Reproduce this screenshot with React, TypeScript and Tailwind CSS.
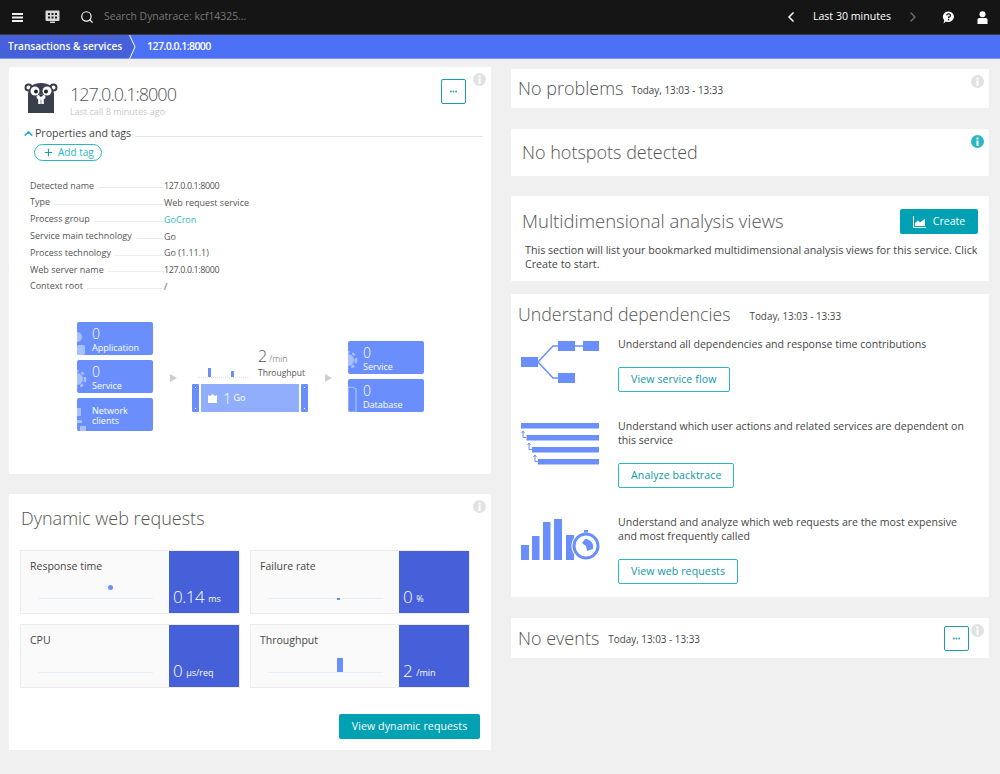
import { Search, ChevronLeft, ChevronRight, ChevronUp, Plus, Ellipsis } from "lucide-react";

const font = "font-['Open_Sans','Noto_Sans',sans-serif]";

const props = [
  { label: "Detected name", value: "127.0.0.1:8000", tight: true },
  { label: "Type", value: "Web request service" },
  { label: "Process group", value: "GoCron", link: true },
  { label: "Service main technology", value: "Go" },
  { label: "Process technology", value: "Go (1.11.1)" },
  { label: "Web server name", value: "127.0.0.1:8000", tight: true },
  { label: "Context root", value: "/" },
];

function InfoDot({ active }: { active?: boolean }) {
  return (
    <svg className="absolute top-[6px] right-[5px]" width="13" height="13" viewBox="0 0 13 13">
      <circle cx="6.5" cy="6.5" r="6.5" fill={active ? "#2ab6c4" : "#e2e2e2"} />
      <rect x="5.5" y="5.5" width="2" height="5.5" fill="#fff" />
      <rect x="5.5" y="2.5" width="2" height="2" fill="#fff" />
    </svg>
  );
}

function Gopher() {
  return (
    <svg width="34" height="32" viewBox="0 0 34 32">
      <circle cx="4.5" cy="5.5" r="3" fill="#fff" stroke="#3a3f4c" strokeWidth="2" />
      <circle cx="29.5" cy="5.5" r="3" fill="#fff" stroke="#3a3f4c" strokeWidth="2" />
      <path d="M4 31 L4 12 Q5 1 17 1 Q29 1 30 12 L30 31 Z" fill="#3a3f4c" />
      <circle cx="11" cy="9" r="4.5" fill="#fff" />
      <circle cx="23" cy="9" r="4.5" fill="#fff" />
      <circle cx="12" cy="9.5" r="2" fill="#222" />
      <circle cx="22" cy="9.5" r="2" fill="#222" />
      <ellipse cx="17" cy="15" rx="4.5" ry="2.6" fill="#fff" />
      <ellipse cx="17" cy="13.6" rx="1.8" ry="1.1" fill="#222" />
      <rect x="14.2" y="17" width="2.5" height="5" fill="#fff" />
      <rect x="17.3" y="17" width="2.5" height="5" fill="#fff" />
    </svg>
  );
}

function FlowBox({ count, label, glyph }: { count?: string; label: string; glyph: "gear" | "db" | "net" | "app" }) {
  return (
    <div className="relative h-[33px] w-[76px] overflow-hidden rounded-[2px] bg-[#6a8ffd] pl-[15px] text-white">
      <svg className="absolute top-0 left-0" width="12" height="33" viewBox="0 0 12 33">
        {glyph === "db" ? (
          <path d="M0 8 Q6 8 8 10 L8 33 L0 33 Z" fill="none" stroke="#a9c0fe" strokeWidth="1.2" />
        ) : glyph === "net" ? (
          <path d="M0 10 h4 v8 h-4 Z M0 22 h5 v3 h-5 Z M3 28 h6 v5 h-6 Z" fill="#a9c0fe" />
        ) : glyph === "app" ? (
          <>
            <circle cx="0" cy="15" r="5" fill="#a9c0fe" />
            <rect x="0" y="23" width="8" height="10" rx="2" fill="#a9c0fe" />
          </>
        ) : (
          <>
            <circle cx="0" cy="19" r="6" fill="#a9c0fe" />
            <circle cx="0" cy="19" r="8" fill="none" stroke="#a9c0fe" strokeWidth="2.5" strokeDasharray="3 3" />
          </>
        )}
      </svg>
      {count ? (
        <>
          <div className="mt-[4px] text-[14px] leading-[16px] font-light">{count}</div>
          <div className="mt-[1px] text-[9px] leading-[10px]">{label}</div>
        </>
      ) : (
        <div className="mt-[8px] w-[50px] text-[9px] leading-[10px]">{label}</div>
      )}
    </div>
  );
}

function Arrow() {
  return <span className="block h-0 w-0 border-y-[4px] border-l-[7px] border-y-transparent border-l-[#cfcfcf]" />;
}

function ServiceFlow() {
  return (
    <div className="mt-[27px] ml-[68px] flex items-center">
      <div className="flex flex-col gap-[5px]">
        <FlowBox count="0" label="Application" glyph="app" />
        <FlowBox count="0" label="Service" glyph="gear" />
        <FlowBox label="Network clients" glyph="net" />
      </div>
      <div className="mt-[4px] ml-[17px]"><Arrow /></div>
      <div className="mt-[6px] ml-[15px] flex w-[116px] flex-col">
        <div className="flex h-[32px] items-end">
          <div className="ml-[6px] flex h-[12px] w-[52px] items-end border-b border-dotted border-[#dde3f0] pl-[10px]">
            <span className="h-[9px] w-[3px] bg-[#6a8ffd]" />
            <span className="ml-[20px] h-[6px] w-[3px] bg-[#6a8ffd]" />
          </div>
          <div className="ml-[8px] flex flex-col items-start text-[#555]">
            <div className="text-[16px] leading-[17px] font-light">2<span className="ml-[2px] text-[9px]">/min</span></div>
            <div className="text-[8.5px] leading-[11px]">Throughput</div>
          </div>
        </div>
        <div className="mt-[6px] flex h-[28px] gap-[2px]">
          <div className="flex w-[7px] flex-col items-center justify-between rounded-[1px] bg-[#6a8ffd] py-[3px]">
            <span className="h-[1px] w-[1px] bg-white" /><span className="h-[1px] w-[1px] bg-white" />
          </div>
          <div className="flex flex-1 items-center bg-[#91aefd] pl-[6px] text-white">
            <svg width="11" height="11" viewBox="0 0 11 11">
              <path d="M1 2 l2 1 l2.5 -2 l2.5 2 l2 -1 v8 h-9 Z" fill="#fff" />
            </svg>
            <span className="ml-[5px] text-[15px] font-light">1</span>
            <span className="ml-[2px] text-[9px]">Go</span>
          </div>
          <div className="flex w-[7px] flex-col items-center justify-between rounded-[1px] bg-[#6a8ffd] py-[3px]">
            <span className="h-[1px] w-[1px] bg-white" /><span className="h-[1px] w-[1px] bg-white" />
          </div>
        </div>
      </div>
      <div className="mt-[4px] ml-[17px]"><Arrow /></div>
      <div className="ml-[16px] flex flex-col gap-[5px]">
        <FlowBox count="0" label="Service" glyph="gear" />
        <FlowBox count="0" label="Database" glyph="db" />
      </div>
    </div>
  );
}

function MetricTile({ title, value, unit, chart }: { title: string; value: string; unit: string; chart: React.ReactNode }) {
  return (
    <div className="flex h-[64px] w-[220px] border border-[#ececec] bg-[#fafafa]">
      <div className="relative flex-1 pl-[9px]">
        <div className="mt-[8px] text-[10.5px] leading-[15px] text-[#454646]">{title}</div>
        <div className="absolute top-[47px] left-[17px] h-px w-[115px] bg-[#e6edfb]" />
        {chart}
      </div>
      <div className="flex w-[70px] items-end bg-[#4560d8] pb-[6px] pl-[4px] text-white">
        <span className="text-[17px] leading-[20px] font-light tracking-[-0.5px]">{value}</span>
        <span className="mb-[1px] ml-[4px] text-[9px] leading-[14px]">{unit}</span>
      </div>
    </div>
  );
}

function OutlineButton({ children }: { children: React.ReactNode }) {
  return (
    <button className="flex h-[25px] items-center rounded-[2px] border border-[#2ab6c4] bg-white px-[12px] text-[10.6px] tracking-[0.1px] text-[#0d98a8]">
      {children}
    </button>
  );
}

function DependencyRow({ icon, text, action, className }: { icon: React.ReactNode; text: React.ReactNode; action: string; className: string }) {
  return (
    <div className={`flex ${className}`}>
      <div className="w-[98px] shrink-0 pt-[4px] pl-[1px]">{icon}</div>
      <div>
        <p className="max-w-[355px] text-[10.6px] leading-[14px] text-[#454646]">{text}</p>
        <div className="mt-[16px]"><OutlineButton>{action}</OutlineButton></div>
      </div>
    </div>
  );
}

export default function App() {
  return (
    <div className={`${font} h-[774px] w-[1000px] overflow-hidden bg-[#f0f0f0]`}>
      <header className="flex h-[35px] items-center border-b border-[#3b3b3b] bg-[#151515] text-white">
        <svg className="ml-[12px]" width="11" height="9" viewBox="0 0 11 9">
          <path d="M0 0h11v2H0zM0 3.5h11v2H0zM0 7h11v2H0z" fill="#f0f0f0" />
        </svg>
        <svg className="ml-[22px]" width="15" height="14" viewBox="0 0 15 14">
          <rect x="0.5" y="0.5" width="14" height="10.5" rx="1" fill="#d8d8d8" />
          <path d="M3 3h2v2H3zM6.5 3h2v2h-2zM10 3h2v2h-2zM3 6.5h2v2H3zM6.5 6.5h2v2h-2zM10 6.5h2v2h-2z" fill="#222" />
          <rect x="5" y="11.5" width="5" height="1.5" fill="#d8d8d8" />
        </svg>
        <Search size={14} className="ml-[20px]" strokeWidth={2} />
        <span className="ml-[10px] text-[10.4px] text-[#777]">Search Dynatrace: kcf14325...</span>
        <ChevronLeft size={16} className="ml-auto" strokeWidth={2.5} />
        <span className="ml-[14px] text-[10.6px]">Last 30 minutes</span>
        <ChevronRight size={16} className="ml-[14px] text-[#707070]" strokeWidth={2} />
        <svg className="ml-[21px]" width="13" height="13" viewBox="0 0 13 13">
          <path d="M6.5 0.5 A5.7 5.2 0 1 1 3.8 10.4 L1.5 12.5 L2.2 9 A5.7 5.2 0 0 1 6.5 0.5 Z" fill="#fff" />
          <path d="M4.7 4.3 A1.9 1.7 0 1 1 6.6 6.2 V7.2" fill="none" stroke="#151515" strokeWidth="1.3" />
          <rect x="5.9" y="8" width="1.4" height="1.4" fill="#151515" />
        </svg>
        <svg className="mr-[12px] ml-[22px]" width="11" height="13" viewBox="0 0 11 13">
          <circle cx="5.5" cy="3.2" r="3" fill="#fff" />
          <path d="M0.5 13 V8.6 Q0.5 7 2.5 7 H8.5 Q10.5 7 10.5 8.6 V13 Z" fill="#fff" />
        </svg>
      </header>

      <nav className="flex h-[24px] items-center border-b border-[#7d97f8] bg-[#4d71f6] text-[10.6px] font-semibold text-white">
        <div className="relative flex h-full w-[130px] items-center bg-[#4560d8] pl-[8px] text-[10.1px] whitespace-nowrap">
          Transactions &amp; services
          <svg className="absolute top-0 -right-[6px]" width="7" height="24" viewBox="0 0 7 24">
            <path d="M0 0 L6 12 L0 24 Z" fill="#4560d8" />
            <path d="M0.5 0 L6 12 L0.5 24" fill="none" stroke="#fff" strokeWidth="1" />
          </svg>
        </div>
        <span className="ml-[17px] tracking-[-0.6px]">127.0.0.1:8000</span>
      </nav>

      <main className="flex items-start gap-[20px] pt-[8px] pl-[9px]">
        <div className="flex w-[482px] flex-col gap-[20px]">
          <section className="relative h-[407px] bg-white">
            <InfoDot />
            <div className="flex pt-[15px] pl-[15px]">
              <Gopher />
              <div className="ml-[12px]">
                <h1 className="text-[18px] leading-[24px] font-light tracking-[-1px] text-[#555]">127.0.0.1:8000</h1>
                <div className="text-[9px] leading-[12px] text-[#c8c8c8]">Last call 8 minutes ago</div>
              </div>
              <button className="absolute top-[12px] right-[25px] flex h-[25px] w-[25px] items-center justify-center rounded-[2px] border border-[#1f9aa8] text-[#1f9aa8]">
                <Ellipsis size={9} strokeWidth={3} />
              </button>
            </div>
            <div className="mt-[8px] flex items-center pr-[8px] pl-[13px]">
              <ChevronUp size={13} className="text-[#2ab6c4]" strokeWidth={3} />
              <span className="text-[10.6px] leading-[15px] text-[#454646]">Properties and tags</span>
              <span className="mt-[6px] ml-[4px] h-px flex-1 bg-[#e6e6e6]" />
            </div>
            <button className="mt-[3px] ml-[25px] flex h-[17px] items-center rounded-full border border-[#2ab6c4] pr-[7px] pl-[8px] text-[10px] text-[#2ab6c4]">
              <Plus size={11} className="text-[#1f9aa8]" strokeWidth={2.5} />
              <span className="ml-[4px]">Add tag</span>
            </button>
            <dl className="mt-[16px] pl-[21px]">
              {props.map((p) => (
                <div key={p.label} className="flex h-[16.8px] items-center text-[9px]">
                  <dt className="flex w-[134px] items-center text-[#555]">
                    <span className="whitespace-nowrap">{p.label}</span>
                    <span className="mt-[5px] ml-[4px] h-px flex-1 bg-[#ececec]" />
                  </dt>
                  <dd className={`mt-[1px] ${p.link ? "text-[#2ab6c4]" : "text-[#555]"} ${p.tight ? "tracking-[-0.4px]" : ""}`}>{p.value}</dd>
                </div>
              ))}
            </dl>
            <ServiceFlow />
          </section>

          <section className="relative h-[256px] bg-white">
            <InfoDot />
            <h2 className="pt-[12px] pl-[12px] text-[18px] leading-[25px] font-light text-[#555]">Dynamic web requests</h2>
            <div className="mt-[19px] grid w-[461px] grid-cols-2 gap-x-[10px] gap-y-[10px] pl-[11px]">
              <MetricTile title="Response time" value="0.14" unit="ms" chart={<span className="absolute top-[34px] left-[87px] h-[5px] w-[5px] rounded-full bg-[#6a8ffd]" />} />
              <MetricTile title="Failure rate" value="0" unit="%" chart={<span className="absolute top-[47px] left-[86px] h-[2px] w-[3px] bg-[#6a8ffd]" />} />
              <MetricTile title="CPU" value="0" unit="µs/req" chart={null} />
              <MetricTile title="Throughput" value="2" unit="/min" chart={<span className="absolute top-[33px] left-[86px] h-[14px] w-[6px] bg-[#6a8ffd]" />} />
            </div>
            <button className="absolute right-[11px] bottom-[11px] h-[25px] w-[141px] rounded-[2px] bg-[#00a1b2] text-[10.6px] tracking-[0.1px] text-white">
              View dynamic requests
            </button>
          </section>
        </div>

        <div className="flex w-[478px] flex-col pt-[2px]">
          <section className="relative flex h-[39px] items-center bg-white pl-[7px]">
            <InfoDot />
            <h2 className="text-[18px] font-light text-[#555]">No problems</h2>
            <span className="mt-[3px] ml-[8px] text-[9.9px] text-[#454646]">Today, 13:03 - 13:33</span>
          </section>
          <section className="relative mt-[21px] flex h-[47px] items-center bg-white pl-[11px]">
            <InfoDot active />
            <h2 className="text-[18px] font-light text-[#555]">No hotspots detected</h2>
          </section>
          <section className="relative mt-[20px] h-[85px] bg-white pt-[11px] pr-[11px] pl-[11px]">
            <div className="flex items-center justify-between">
              <h2 className="text-[18.5px] leading-[25px] font-light text-[#555]">Multidimensional analysis views</h2>
              <button className="mt-[2px] flex h-[25px] w-[78px] items-center justify-center rounded-[2px] bg-[#00a1b2] text-[10.6px] text-white">
                <svg width="13" height="12" viewBox="0 0 13 12">
                  <path d="M0.5 0 V11.5 H13" fill="none" stroke="#fff" strokeWidth="1" />
                  <path d="M2 10 V7 L5 4.5 L7 6.5 L12 2.5 V10 Z" fill="#fff" />
                </svg>
                <span className="ml-[7px]">Create</span>
              </button>
            </div>
            <p className="mt-[10px] -mr-[4px] pl-[3px] text-[10.7px] leading-[13.5px] text-[#454646]">
              This section will list your bookmarked multidimensional analysis views for this service. Click Create to start.
            </p>
          </section>
          <section className="mt-[13px] h-[303px] bg-white pt-[8px] pl-[7px]">
            <div className="flex items-center">
              <h2 className="text-[17.8px] leading-[25px] font-light text-[#555]">Understand dependencies</h2>
              <span className="mt-[3px] ml-[19px] text-[9.9px] text-[#454646]">Today, 13:03 - 13:33</span>
            </div>
            <DependencyRow
              className="mt-[10px] pl-[2px]"
              icon={
                <svg width="79" height="42" viewBox="0 0 79 42">
                  <path d="M17 21 L32 5 H62 M17 21 L32 37 H40" fill="none" stroke="#6a8ffd" strokeWidth="1.5" />
                  <rect x="0" y="16" width="17" height="10" fill="#6a8ffd" />
                  <rect x="37" y="0" width="17" height="10" fill="#6a8ffd" />
                  <rect x="62" y="0" width="16" height="10" fill="#6a8ffd" />
                  <rect x="37" y="32" width="17" height="10" fill="#6a8ffd" />
                </svg>
              }
              text="Understand all dependencies and response time contributions"
              action="View service flow"
            />
            <DependencyRow
              className="mt-[27px] pl-[2px]"
              icon={
                <svg width="79" height="42" viewBox="0 0 79 42">
                  <rect x="0" y="0" width="78" height="5.5" fill="#6a8ffd" />
                  <rect x="5.5" y="12" width="72.5" height="5.5" fill="#6a8ffd" />
                  <rect x="11" y="24" width="67" height="5.5" fill="#6a8ffd" />
                  <rect x="17" y="36" width="61" height="5.5" fill="#6a8ffd" />
                  <path d="M2 9 V14.5 H5 M8 21 V26.5 H11 M14 33 V38.5 H17" fill="none" stroke="#6a8ffd" strokeWidth="1" />
                  <path d="M0.5 10 L2 8 L3.5 10 M6.5 22 L8 20 L9.5 22 M12.5 34 L14 32 L15.5 34" fill="none" stroke="#6a8ffd" strokeWidth="1" />
                </svg>
              }
              text="Understand which user actions and related services are dependent on this service"
              action="Analyze backtrace"
            />
            <DependencyRow
              className="mt-[27px] pl-[2px]"
              icon={
                <svg width="79" height="42" viewBox="0 0 79 42">
                  <rect x="0" y="26" width="8" height="15" fill="#6a8ffd" />
                  <rect x="11" y="17" width="7.5" height="24" fill="#6a8ffd" />
                  <rect x="22" y="3" width="7.5" height="38" fill="#6a8ffd" />
                  <rect x="33" y="0" width="8" height="41" fill="#6a8ffd" />
                  <rect x="45" y="16" width="8" height="25" fill="#6a8ffd" />
                  <circle cx="65" cy="27" r="14.5" fill="#fff" />
                  <circle cx="65" cy="27" r="12" fill="#fff" stroke="#6a8ffd" strokeWidth="3" />
                  <path d="M65 27 L61 24 L64 20 A8 8 0 0 1 72 30 L66 32 Z" fill="#6a8ffd" />
                  <rect x="63" y="11" width="4" height="2.5" fill="#6a8ffd" />
                </svg>
              }
              text="Understand and analyze which web requests are the most expensive and most frequently called"
              action="View web requests"
            />
          </section>
          <section className="relative mt-[21px] flex h-[40px] items-center bg-white pl-[7px]">
            <InfoDot />
            <h2 className="text-[18px] font-light text-[#555]">No events</h2>
            <span className="mt-[3px] ml-[9px] text-[9.9px] text-[#454646]">Today, 13:03 - 13:33</span>
            <button className="absolute top-[8px] right-[20px] flex h-[25px] w-[25px] items-center justify-center rounded-[2px] border border-[#1f9aa8] text-[#1f9aa8]">
              <Ellipsis size={9} strokeWidth={3} />
            </button>
          </section>
        </div>
      </main>
    </div>
  );
}
